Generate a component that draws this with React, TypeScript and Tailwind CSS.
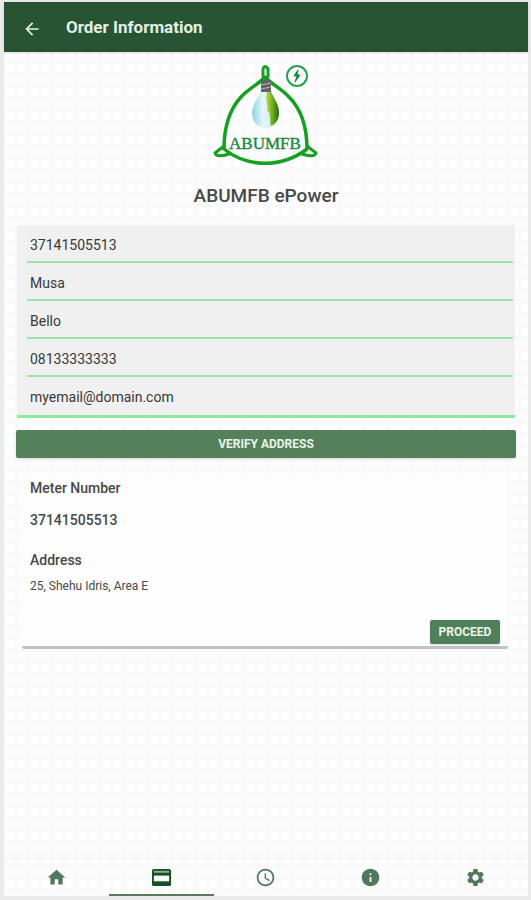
import { MdArrowBack, MdHome, MdInfo, MdSettings, MdAccessTime } from 'react-icons/md';

const fields = [
    { id: 'meter', label: 'Meter number', type: 'text', value: '37141505513' },
    { id: 'firstName', label: 'First name', type: 'text', value: 'Musa' },
    { id: 'lastName', label: 'Last name', type: 'text', value: 'Bello' },
    { id: 'phone', label: 'Phone', type: 'tel', value: '08133333333' },
    { id: 'email', label: 'Email', type: 'email', value: 'myemail@domain.com' },
];

const tabs = [
    { name: 'Home', icon: MdHome, active: false },
    { name: 'Orders', icon: CardIcon, active: true },
    { name: 'History', icon: MdAccessTime, active: false },
    { name: 'About', icon: MdInfo, active: false },
    { name: 'Settings', icon: MdSettings, active: false },
];

function CardIcon({ size }: { size: number }) {
    return (
        <svg width={size} height={size} viewBox="0 0 22 22" aria-hidden="true">
            <rect x="1" y="2" width="20" height="18" rx="2" fill="currentColor" />
            <path d="M3 5H19" stroke="#8fae96" strokeWidth="2" />
            <path d="M3 9H19V15H3Z" fill="#f7faf7" />
        </svg>
    );
}

function Logo() {
    return (
        <svg width="110" height="106" viewBox="0 0 110 106" role="img" aria-label="ABUMFB logo">
            <defs>
                <linearGradient id="glass" x1="0" x2="1" y1="0" y2="0">
                    <stop offset="0" stopColor="#8fd3e6" />
                    <stop offset="0.4" stopColor="#e2f6fa" />
                    <stop offset="1" stopColor="#c5e9ef" />
                </linearGradient>
                <linearGradient id="leaf" x1="0" x2="1" y1="0" y2="0">
                    <stop offset="0" stopColor="#c3dc58" />
                    <stop offset="0.5" stopColor="#6fae1c" />
                    <stop offset="1" stopColor="#256a10" />
                </linearGradient>
            </defs>
            <g fill="none" stroke="#16a022" strokeWidth="3.5" strokeLinejoin="round" strokeLinecap="round">
                <path d="M54 15C48 22 38 26 30 35C18 48 13 65 13 87C37 106 71 106 96 87C96 65 91 48 78 35C70 26 60 22 54 15Z" />
                <path d="M52 15V7Q54 2 57 7V15" strokeWidth="3" />
                <path d="M13 84L4 91Q5 96 18 92M96 84L105 91Q104 96 91 92" strokeWidth="3" />
            </g>
            {/* Bulb */}
            <path d="M50 29C48 36 41 41 41 51C41 60 47 66 55 66C63 66 68 60 68 51C68 41 62 36 60 29Z" fill="url(#glass)" />
            <path d="M56 30C53 38 58 43 56 48C61 52 58 60 60 64C65 62 68 57 68 51C68 41 62 36 60 29Z" fill="url(#leaf)" />
            <path d="M50 19Q55 15 60 19V30H50Z" fill="#626262" />
            <path d="M50 23L60 21M50 27L60 25" stroke="#b5b5b5" strokeWidth="1" />
            <text x="54" y="87" textAnchor="middle" fontSize="17" fill="#178b3d" stroke="#178b3d" strokeWidth="0.4" className="font-['Liberation_Serif',serif]">
                ABUMFB
            </text>
            {/* Power badge */}
            <circle cx="86" cy="14" r="10" fill="none" stroke="#27a052" strokeWidth="2" />
            <path d="M87 8L83 14H86L84 20L89 13H86Z" fill="#168a3e" stroke="#168a3e" />
        </svg>
    );
}

export default function App() {
    return (
        <div className="min-h-screen flex flex-col bg-[#ebebeb] pt-0.5 pb-1 pl-1 pr-[3px] font-[Roboto,sans-serif] text-[#484848]">
            <div className="grow flex flex-col bg-[#f9f9f9] bg-[radial-gradient(circle,#fefefe_3px,transparent_6px)] bg-size-[12px_12px]">
                <header className="flex items-center gap-6 h-[50px] pl-[18px] bg-[#285434] text-[#e4efe2] shadow-sm">
                    <button type="button" aria-label="Back" className="pt-1">
                        <MdArrowBack size={20} />
                    </button>
                    <h1 className="pt-0.5 text-[17px] font-bold">Order Information</h1>
                </header>

                <main className="grow flex flex-col px-3">
                    <div className="flex flex-col items-center pt-2.5">
                        <Logo />
                        <h2 className="mt-3 pt-0.5 text-[19px] leading-7 font-medium">ABUMFB ePower</h2>
                    </div>

                    <form>
                        <div className="mt-[15px] mx-px bg-[#f0f0f0] border-b-3 border-[#8ce8a2]">
                            {fields.map((field) => (
                                <div key={field.id} className="group h-[38px] pl-2.5 pr-0.5">
                                    <input
                                        id={field.id}
                                        aria-label={field.label}
                                        type={field.type}
                                        defaultValue={field.value}
                                        className="block w-full h-full px-[3px] pt-1 text-sm text-[#383838] border-b-2 border-[#9ce5ad] group-last:border-transparent outline-none"
                                    />
                                </div>
                            ))}
                        </div>
                        <button type="button" className="mt-3 w-full h-7 rounded-xs bg-[#54805c] text-xs font-bold text-[#eaf5e9] shadow-sm">
                            VERIFY ADDRESS
                        </button>
                    </form>

                    <section className="mt-4 ml-1.5 mr-2 px-2 pt-0.5 bg-[#fdfdfd] border-b-3 border-[#c2c2c2] rounded-xs">
                        <h3 className="text-sm leading-6 font-medium">Meter Number</h3>
                        <p className="mt-2 text-sm leading-6 font-medium">37141505513</p>
                        <h3 className="mt-4 text-sm leading-6 font-medium">Address</h3>
                        <p className="mt-1 text-xs leading-5">25, Shehu Idris, Area E</p>
                        <div className="mt-6 pb-0.5 flex justify-end">
                            <button type="button" className="h-6 w-[70px] rounded-xs bg-[#50805b] text-xs font-bold text-[#eaf5e9] shadow-sm">
                                PROCEED
                            </button>
                        </div>
                    </section>
                </main>

                <nav className="grid grid-cols-5 h-[38px] border-t border-[#f0f0f0]">
                    {tabs.map(({ name, icon: Icon, active }) => (
                        <a
                            key={name}
                            href="#"
                            aria-label={name}
                            className={`flex items-center justify-center pt-0.5 border-b-2 ${active ? 'text-[#1b4d27] border-[#59775f]' : 'text-[#52775c] border-transparent'}`}
                        >
                            <Icon size={21} />
                        </a>
                    ))}
                </nav>
            </div>
        </div>
    );
}
